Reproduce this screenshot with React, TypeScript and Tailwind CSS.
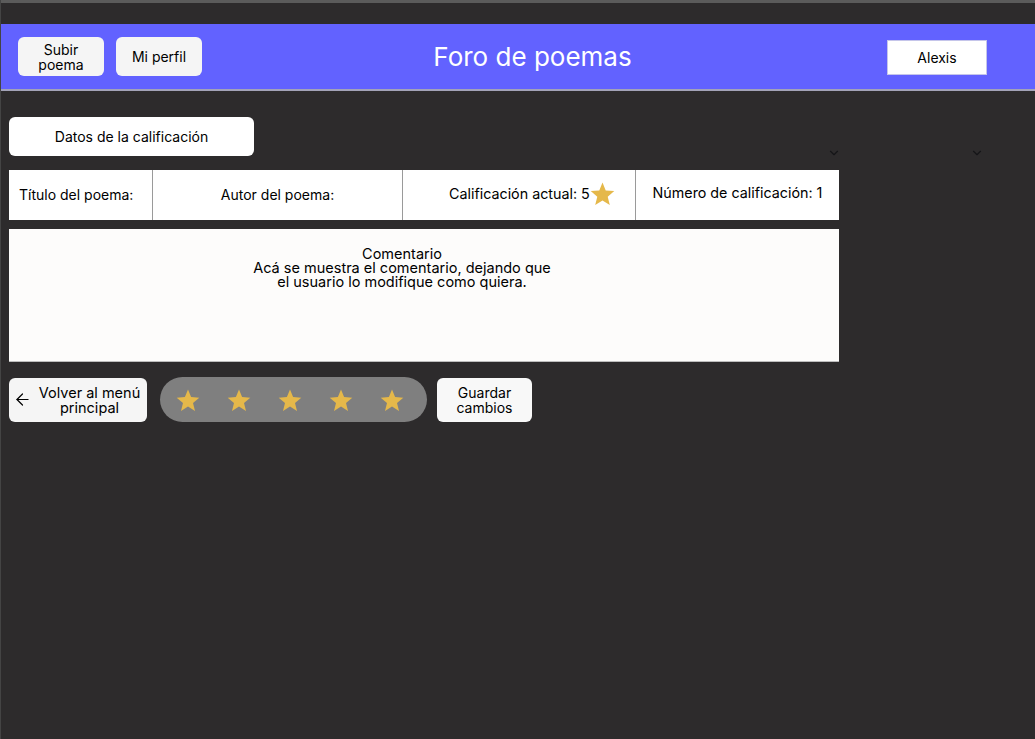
import React from 'react';
import { ArrowLeft, ChevronDown } from 'lucide-react';

const Star = ({ size = 24 }: { size?: number }) => (
    <svg width={size} height={size} viewBox="0 0 24 24" className="shrink-0">
        <path d="M12 1.5l3.1 7.6 8.2.6-6.3 5.3 2 8-7-4.4-7 4.4 2-8L.7 9.7l8.2-.6z" fill="#e5b84a" />
    </svg>
);

export default function App() {
    return (
        <div className="w-[1035px] h-[739px] bg-[#2d2b2c] border-l border-[#444] text-black overflow-hidden" style={{ fontFamily: 'Inter, "Noto Sans", sans-serif' }}>
            <div className="h-[3px] bg-[#5b5b5b]" />
            {/* header */}
            <header className="mt-[21px] h-[67px] bg-[#6262ff] border-b-2 border-[#a3a3b8] flex items-center px-[17px]">
                <div className="flex gap-3">
                    <button className="w-[86px] h-[39px] rounded-md bg-[#f5f5f5] text-[14px] leading-[15px]">Subir<br />poema</button>
                    <button className="w-[86px] h-[39px] rounded-md bg-[#f5f5f5] text-[14px]">Mi perfil</button>
                </div>
                <h1 className="flex-1 text-center text-white text-[26px] pr-[24px]">Foro de poemas</h1>
                <div className="w-[100px] h-[35px] bg-white border border-[#c5c5ea] flex items-center justify-center text-[14px] mr-[31px] mt-[2px]">Alexis</div>
            </header>

            <main className="pl-[8px] pt-[26px]">
                <div className="flex items-start h-[39px] overflow-visible">
                    <button className="w-[245px] h-[39px] rounded-md bg-white text-[14px]">Datos de la calificación</button>
                    <ChevronDown className="ml-[573px] mt-[29px] text-[#151518]" size={14} strokeWidth={2} />
                    <ChevronDown className="ml-[129px] mt-[29px] text-[#151518]" size={14} strokeWidth={2} />
                </div>

                <div className="mt-[14px] w-[830px] h-[50px] flex bg-white text-[14px]">
                    <div className="w-[144px] border-r border-[#9a9a9a] flex items-center pl-[10px] pb-[1px]">Título del poema:</div>
                    <div className="w-[250px] border-r border-[#9a9a9a] flex items-center justify-center pb-[1px]">Autor del poema:</div>
                    <div className="w-[233px] border-r border-[#9a9a9a] flex items-center pl-[46px] pb-[3px] text-[14.3px]">
                        Calificación actual: 5<Star size={25} />
                    </div>
                    <div className="flex-1 flex items-center justify-center pb-[5px] text-[14.3px]">Número de calificación: 1</div>
                </div>

                <div className="mt-[9px] w-[830px] h-[133px] bg-[#fdfcfb] border-b border-[#bdbdbd] pt-[18px] pr-[44px] text-center text-[14.5px] leading-[14px]">
                    Comentario<br />
                    Acá se muestra el comentario, dejando que<br />
                    el usuario lo modifique como quiera.
                </div>

                <div className="mt-[15px] flex items-center">
                    <button className="w-[138px] h-[44px] rounded-md bg-[#f5f5f5] flex items-center pl-[4px] text-[14.5px] leading-[15px]">
                        <ArrowLeft size={19} strokeWidth={1.5} />
                        <span className="flex-1 text-center">Volver al menú<br />principal</span>
                    </button>
                    <div className="ml-[13px] w-[267px] h-[45px] rounded-full bg-[#7f7f7f] flex items-center gap-[27px] pl-[16px]">
                        <Star /><Star /><Star /><Star /><Star />
                    </div>
                    <button className="ml-[10px] w-[95px] h-[44px] rounded-md bg-[#f8f8f8] text-[14px] leading-[15px]">Guardar<br />cambios</button>
                </div>
            </main>
        </div>
    );
}
